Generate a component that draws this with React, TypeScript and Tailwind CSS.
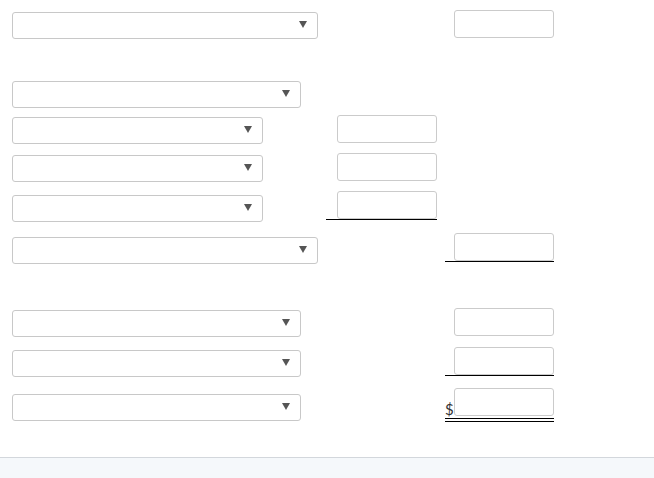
import React from "react";

function Arrow() {
  return (
    <svg width="8" height="7" viewBox="0 0 8 7" className="block">
      <polygon points="0,0 8,0 4,7" fill="#555555" />
    </svg>
  );
}

function Select({ w, mt }: { w: string; mt: string }) {
  return (
    <div
      className={`${w} ${mt} h-[27px] rounded-[3px] border border-[#c8c8c8] bg-white flex items-center justify-end pr-[10px] pb-[2px]`}
    >
      <Arrow />
    </div>
  );
}

function Input() {
  return <div className="w-[100px] h-[28px] rounded-[3px] border border-[#cbcbcb] bg-white" />;
}

type Row = {
  h: string;
  sel: string;
  selMt: string;
  mid?: "plain" | "under";
  right?: "plain" | "under" | "double";
};

const rows: Row[] = [
  { h: "h-[71px]", sel: "w-[306px]", selMt: "mt-[2px]", right: "plain" },
  { h: "h-[34px]", sel: "w-[289px]", selMt: "mt-0" },
  { h: "h-[38px]", sel: "w-[251px]", selMt: "mt-[2px]", mid: "plain" },
  { h: "h-[38px]", sel: "w-[251px]", selMt: "mt-[2px]", mid: "plain" },
  { h: "h-[42px]", sel: "w-[251px]", selMt: "mt-[4px]", mid: "under" },
  { h: "h-[75px]", sel: "w-[306px]", selMt: "mt-[4px]", right: "under" },
  { h: "h-[39px]", sel: "w-[289px]", selMt: "mt-[2px]", right: "plain" },
  { h: "h-[41px]", sel: "w-[289px]", selMt: "mt-[3px]", right: "under" },
  { h: "h-[69px]", sel: "w-[289px]", selMt: "mt-[6px]", right: "double" },
];

export default function App() {
  return (
    <div
      className="w-[654px] h-[478px] bg-white flex flex-col overflow-hidden"
      style={{ fontFamily: "Lato, 'Liberation Sans', sans-serif" }}
    >
      <div className="pt-[10px] pl-[12px] flex-1">
        {rows.map((r, i) => (
          <div key={i} className={`flex items-start ${r.h}`}>
            <div className="w-[314px] flex">
              <Select w={r.sel} mt={r.selMt} />
            </div>
            <div className="w-[111px] flex justify-end">
              {r.mid === "plain" && <Input />}
              {r.mid === "under" && (
                <div className="w-[111px] flex justify-end border-b border-black">
                  <Input />
                </div>
              )}
            </div>
            <div className="w-[8px]" />
            <div className="w-[109px]">
              {r.right === "plain" && (
                <div className="flex justify-end">
                  <Input />
                </div>
              )}
              {r.right === "under" && (
                <div className="flex justify-end border-b border-black">
                  <Input />
                </div>
              )}
              {r.right === "double" && (
                <div>
                  <div className="flex items-end justify-between">
                    <span className="text-[15px] leading-[18px] text-[#333333] mb-[-2px]">$</span>
                    <Input />
                  </div>
                  <div className="mt-[2px] h-[4px] border-t border-b border-black" />
                </div>
              )}
            </div>
          </div>
        ))}
      </div>
      <div className="h-[21px] border-t border-[#d3d7dc] bg-[#f5f8fb]" />
    </div>
  );
}
